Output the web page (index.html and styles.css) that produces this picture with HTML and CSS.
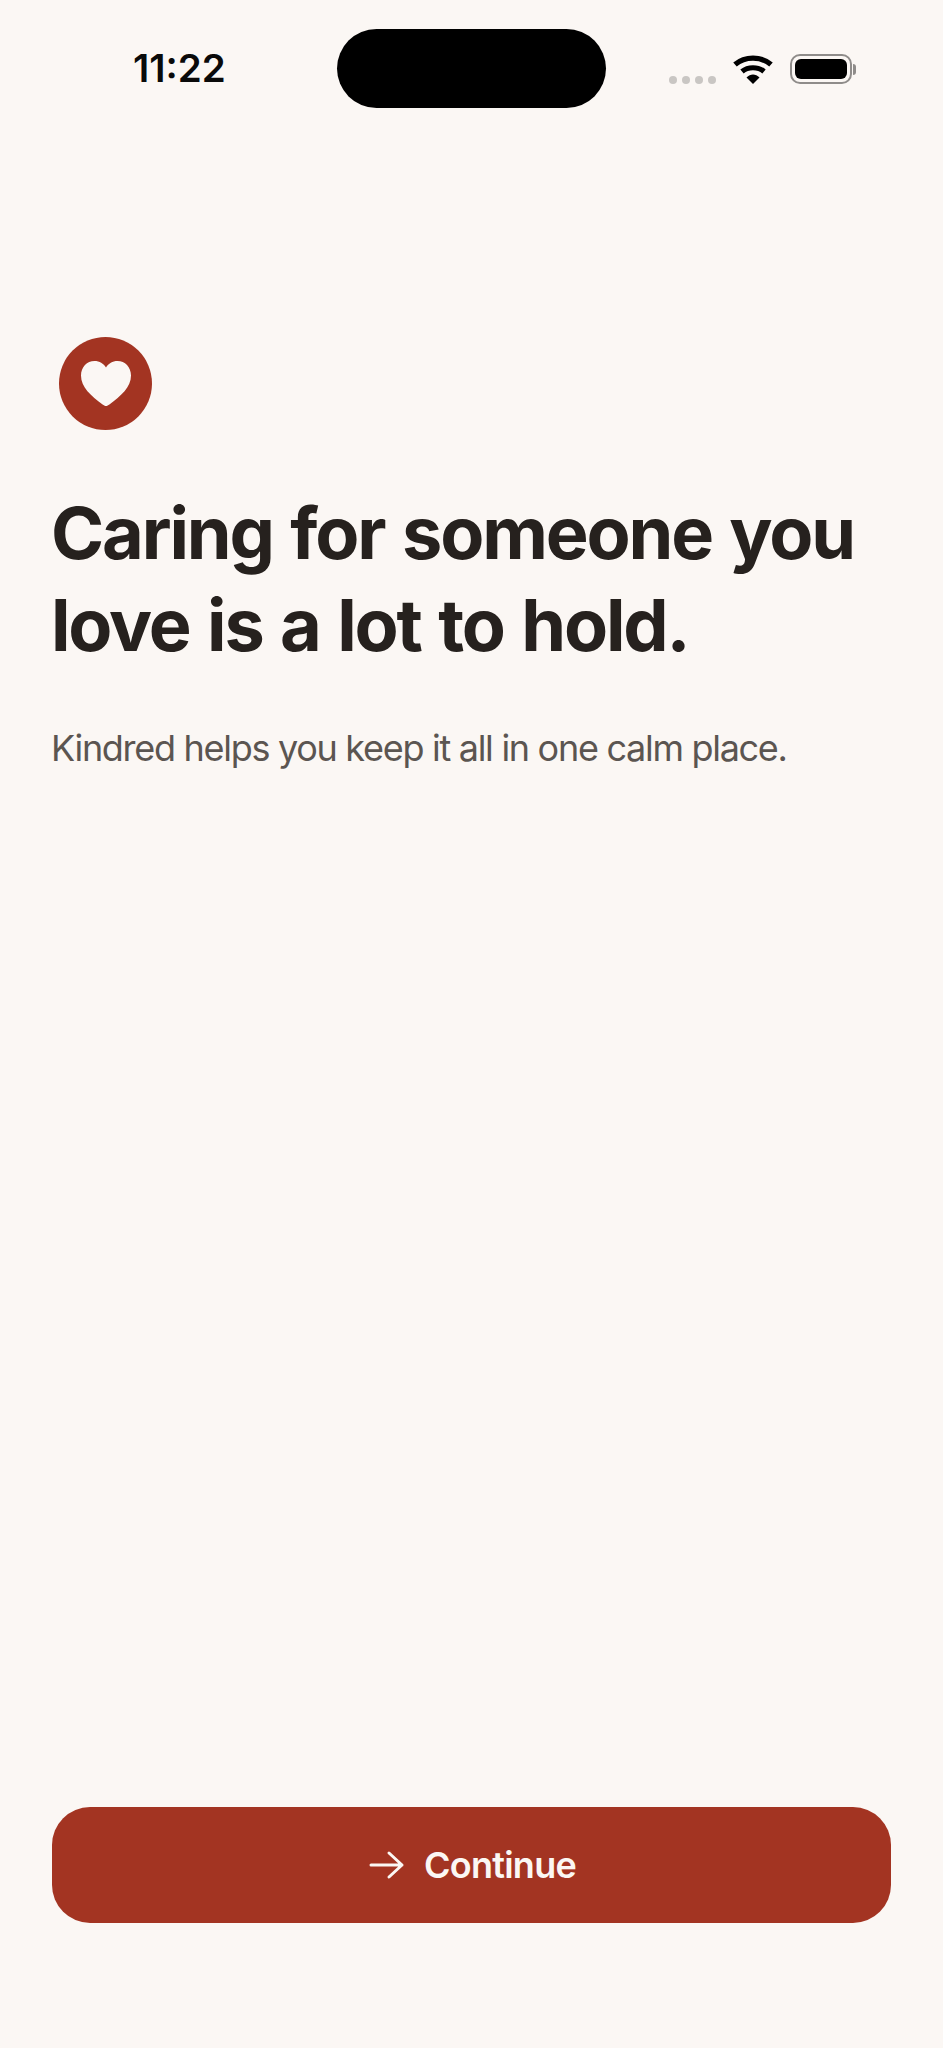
FILE: index.html
```html
<!DOCTYPE html>
<html lang="en">
<head>
<meta charset="utf-8">
<title>Kindred</title>
<link rel="stylesheet" href="styles.css">
</head>
<body>
<main class="screen">
  <header class="status">
    <span class="time">11:22</span>
    <div class="island"></div>
    <div class="indicators">
      <div class="signal"><i></i><i></i><i></i><i></i></div>
      <svg class="wifi" width="42" height="32" viewBox="0 0 42 32" aria-hidden="true">
        <path d="M3 11.5C13 3 29 3 39 11.5" fill="none" stroke="#000" stroke-width="5.4"/>
        <path d="M10 18.5C16 13.5 26 13.5 32 18.5" fill="none" stroke="#000" stroke-width="5.2"/>
        <path d="M14.5 24.5C18.5 20.5 23.5 20.5 27.5 24.5L21 31Z" fill="#000"/>
      </svg>
      <div class="battery"><div class="battery-body"><div class="battery-fill"></div></div><div class="battery-cap"></div></div>
    </div>
  </header>
  <section class="intro">
    <div class="logo">
      <svg width="50" height="46" viewBox="0 0 50 46" aria-hidden="true">
        <path d="M25 45C23.8 45 22.8 44.4 21.6 43.5C10 35 0 26 0 14.5C0 6 6 0 13.5 0C18.5 0 22.5 2.5 25 6.5C27.5 2.5 31.5 0 36.5 0C44 0 50 6 50 14.5C50 26 40 35 28.4 43.5C27.2 44.4 26.2 45 25 45Z" fill="#fbf7f4"/>
      </svg>
    </div>
    <h1 class="title">Caring for someone you love is a lot to hold.</h1>
    <p class="lead">Kindred helps you keep it all in one calm place.</p>
  </section>
  <button class="cta" type="button">
    <svg width="36" height="30" viewBox="0 0 36 30" aria-hidden="true">
      <path d="M2 15H33M20 3L33 15L20 27" fill="none" stroke="#fbf7f4" stroke-width="3" stroke-linecap="round" stroke-linejoin="round"/>
    </svg>
    <span>Continue</span>
  </button>
</main>
</body>
</html>
```
FILE: styles.css
```css
* { box-sizing: border-box; }
html, body { margin: 0; padding: 0; background: #fbf7f4; }
.screen {
  width: 943px;
  height: 2048px;
  display: flex;
  flex-direction: column;
  padding: 0 52px 125px;
  font-family: Inter, "Liberation Sans", sans-serif;
  overflow: hidden;
}
.status {
  height: 108px;
  padding-top: 29px;
  display: flex;
  align-items: flex-start;
  position: relative;
}
.time {
  margin: 23px 0 0 81px;
  font-size: 38.5px;
  line-height: 33px;
  font-weight: 600;
  color: #0a0a0a;
}
.island {
  position: absolute;
  left: 285px;
  top: 29px;
  width: 269px;
  height: 79px;
  border-radius: 40px;
  background: #000;
}
.indicators {
  margin-left: auto;
  margin-right: 35px;
  display: flex;
  align-items: flex-start;
  padding-top: 24px;
}
.signal { display: flex; gap: 5px; margin-top: 23px; margin-right: 16px; }
.signal i { width: 8px; height: 8px; border-radius: 50%; background: #c9c6c3; }
.wifi { margin-right: 16px; margin-top: 0; }
.battery { display: flex; align-items: center; margin-top: 1px; }
.battery-body {
  width: 62px;
  height: 30px;
  padding: 3px;
  border: 2.5px solid #8f8c8a;
  border-radius: 10px;
}
.battery-fill { width: 100%; height: 100%; background: #000; border-radius: 6px; }
.battery-cap { width: 3px; height: 11px; margin-left: 1px; border-radius: 0 3px 3px 0; background: #8f8c8a; }
.intro { flex: 1; padding-top: 229px; }
.logo {
  width: 93px;
  height: 93px;
  margin-left: 7px;
  border-radius: 50%;
  background: #a33422;
  display: flex;
  align-items: center;
  justify-content: center;
}
.title {
  margin: 57px 0 0 -1px;
  font-size: 72px;
  line-height: 92px;
  font-weight: 700;
  letter-spacing: -2.15px;
  word-spacing: 2.6px;
  color: #26211e;
}
.lead {
  margin: 52px 0 0 -1px;
  font-size: 36px;
  line-height: 50px;
  font-weight: 400;
  letter-spacing: -1.29px;
  color: #5b5551;
}
.cta {
  height: 116px;
  width: 839px;
  flex: none;
  border: 0;
  border-radius: 38px;
  padding-left: 8px;
  background: #a33422;
  color: #fbf7f4;
  font-family: inherit;
  font-size: 36px;
  font-weight: 560;
  letter-spacing: -0.75px;
  display: flex;
  align-items: center;
  justify-content: center;
  gap: 19px;
}
```
